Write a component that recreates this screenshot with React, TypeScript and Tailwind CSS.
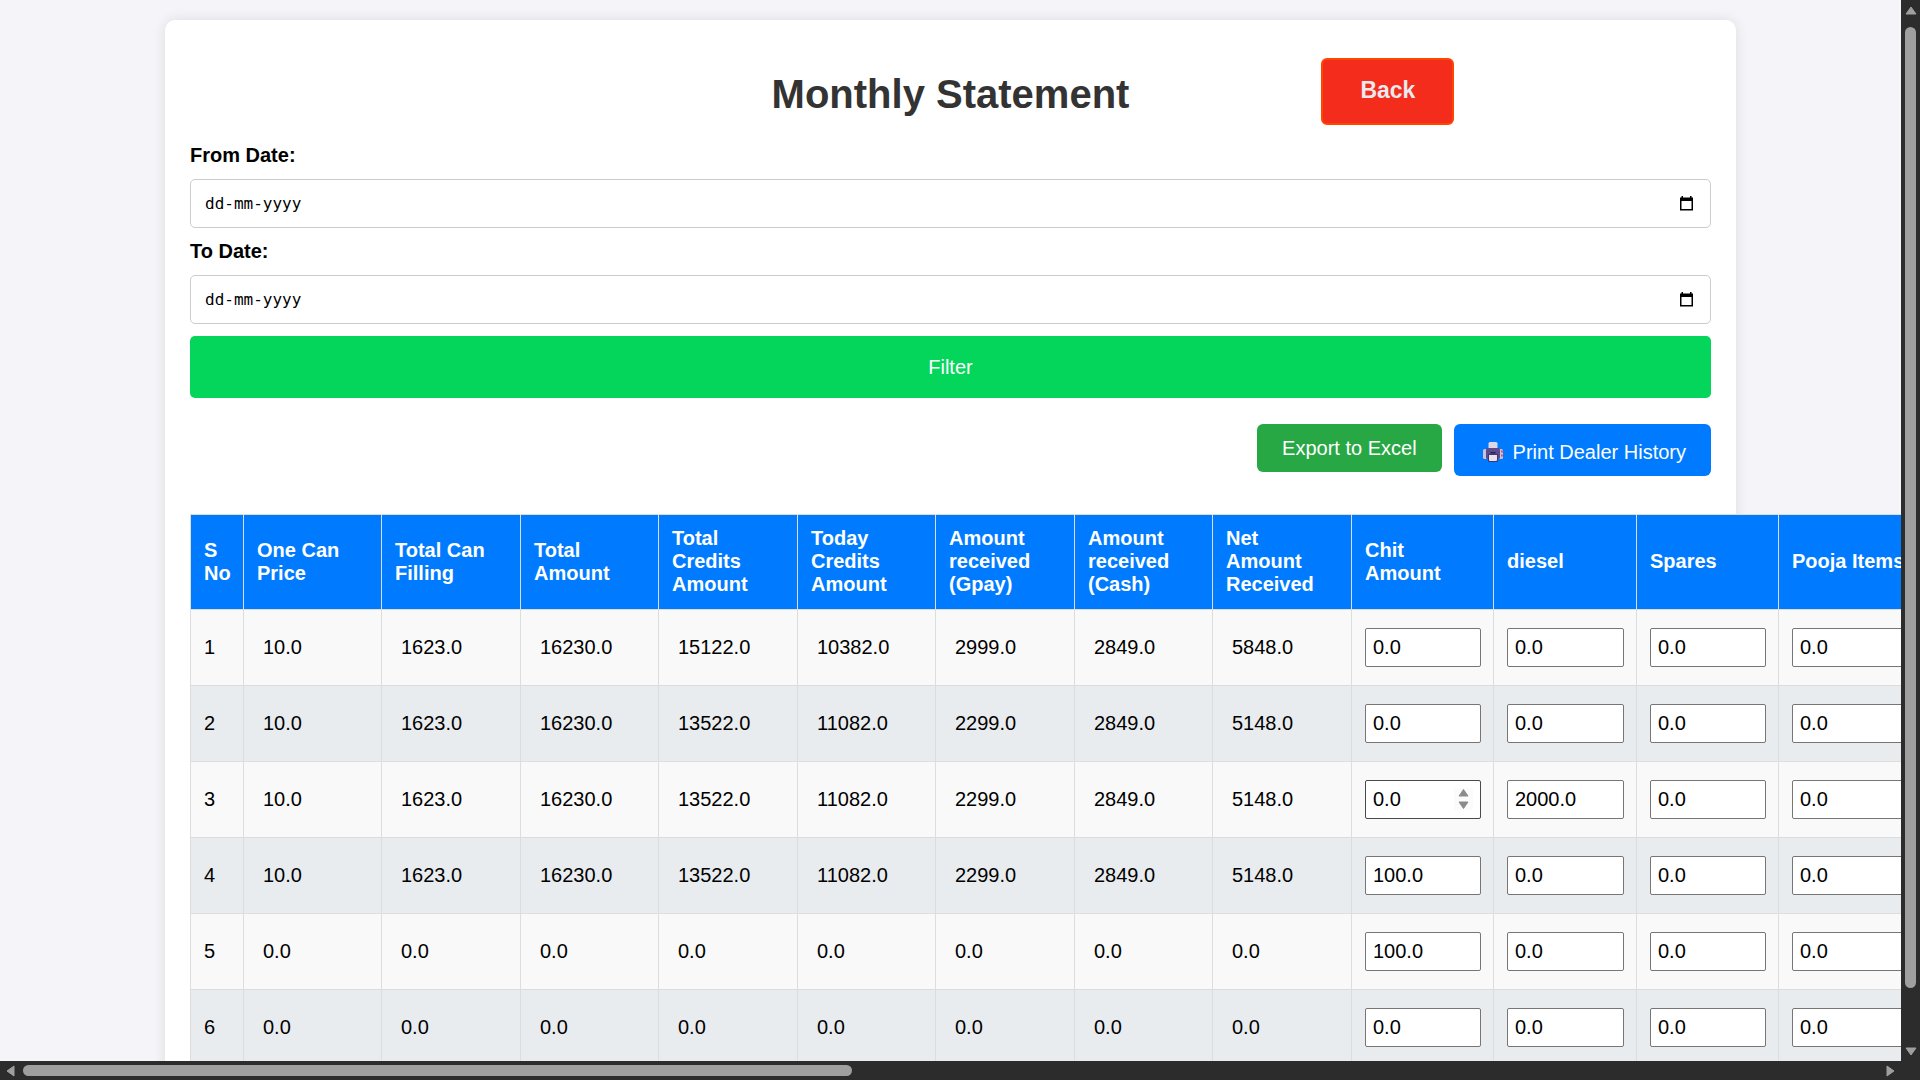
import { useState } from "react";

type Row = { readings: string[]; expenses: string[] };

const readingHeads = [
  "One Can Price",
  "Total Can Filling",
  "Total Amount",
  "Total Credits Amount",
  "Today Credits Amount",
  "Amount received (Gpay)",
  "Amount received (Cash)",
  "Net Amount Received",
];
const expenseHeads = ["Chit Amount", "diesel", "Spares", "Pooja Items"];

const zero = Array<string>(8).fill("0.0");
const typical = ["10.0", "1623.0", "16230.0", "13522.0", "11082.0", "2299.0", "2849.0", "5148.0"];

const rows: Row[] = [
  {
    readings: ["10.0", "1623.0", "16230.0", "15122.0", "10382.0", "2999.0", "2849.0", "5848.0"],
    expenses: ["0.0", "0.0", "0.0", "0.0"],
  },
  { readings: typical, expenses: ["0.0", "0.0", "0.0", "0.0"] },
  { readings: typical, expenses: ["0.0", "2000.0", "0.0", "0.0"] },
  { readings: typical, expenses: ["100.0", "0.0", "0.0", "0.0"] },
  { readings: zero, expenses: ["100.0", "0.0", "0.0", "0.0"] },
  { readings: zero, expenses: ["0.0", "0.0", "0.0", "0.0"] },
];

function DateField({ id, label }: { id: string; label: string }) {
  const [value, setValue] = useState("");
  return (
    <div className="flex flex-col gap-3">
      <label htmlFor={id} className="font-bold">
        {label}
      </label>
      <div className="flex h-[49px] items-center rounded-[5px] border border-[#cccccc] bg-white px-3.5">
        <input
          id={id}
          type="text"
          value={value}
          onChange={(e) => setValue(e.target.value)}
          placeholder="dd-mm-yyyy"
          className="min-w-0 flex-1 bg-transparent font-['DejaVu_Sans_Mono',monospace] text-[16px] leading-5 outline-none placeholder:text-black"
        />
        <button type="button" aria-label={"Pick " + label} className="mr-0.5">
          <svg width="15" height="16" viewBox="0 1 15 16" className="block">
            <path d="M2.500 1h1.500v2H2.500zM11 1h1.500v2H11z" fill="#000" />
            <path d="M1 2.500h13V15.500H1zM2.500 6v8h10V6z" fill="#000" fillRule="evenodd" />
          </svg>
        </button>
      </div>
    </div>
  );
}

function PrinterIcon() {
  return (
    <svg width="20" height="20" viewBox="0 0 20 20" className="block">
      <rect x="0" y="7" width="20" height="10" rx="1.500" fill="#c9c3d6" />
      <rect x="18" y="8.500" width="2" height="2" fill="#f0506e" />
      <rect x="18" y="12.500" width="2" height="2" fill="#f0506e" />
      <rect x="5.500" y="0" width="9" height="8" rx="1.500" fill="#dcd6e6" />
      <rect x="3" y="6" width="14" height="11" rx="1.500" fill="#5b4b8f" />
      <rect x="7.500" y="10" width="5" height="1.500" fill="#2b2145" />
      <path d="M5 12h10v6.500a1.500 1.500 0 0 1-1.500 1.500h-7A1.500 1.500 0 0 1 5 18.500z" fill="#43346f" />
      <path d="M6 13h8v5a1 1 0 0 1-1 1H7a1 1 0 0 1-1-1z" fill="#e6e1ee" />
    </svg>
  );
}

function AmountInput({ initial, label, active }: { initial: string; label: string; active: boolean }) {
  const [value, setValue] = useState(initial);
  return (
    <div className="relative">
      <input
        type="text"
        inputMode="decimal"
        aria-label={label}
        value={value}
        onChange={(e) => setValue(e.target.value)}
        className={
          "block h-[39px] w-full rounded-[2px] border bg-white px-[7px] text-[20px] leading-6 text-black " +
          (active ? "border-[#4a4a4a]" : "border-[#767676]")
        }
      />
      {active && (
        <svg
          width="19"
          height="22"
          viewBox="0 0 19 22"
          className="absolute top-2 right-2"
          aria-hidden="true"
        >
          <rect width="19" height="22" fill="#fbfbfb" />
          <path d="M9.500 1.500l4.500 6.500H5z M5 14h9l-4.500 6.500z" fill="#8b8b8b" stroke="#8b8b8b" strokeLinejoin="round" />
        </svg>
      )}
    </div>
  );
}

function Arrow({ direction }: { direction: "up" | "down" | "left" | "right" }) {
  const paths = {
    up: "M6 2l5 7H1z",
    down: "M6 10L1 3h10z",
    left: "M2 6l7-5v10z",
    right: "M10 6L3 1v10z",
  };
  return (
    <svg width="12" height="12" viewBox="0 0 12 12" className="block shrink-0" aria-hidden="true">
      <path d={paths[direction]} fill="#9f9f9f" stroke="#9f9f9f" strokeLinejoin="round" />
    </svg>
  );
}

export default function App() {
  return (
    <div className="grid h-screen grid-cols-[minmax(0,1fr)_19px] grid-rows-[minmax(0,1fr)_19px] bg-[#2c2c2c] font-['Liberation_Sans',Arial,sans-serif] text-[20px] leading-[23px] text-black">
      <main className="overflow-hidden bg-[#f4f4f9] px-[165px] pt-5">
        <div className="rounded-[10px] bg-white p-[25px] shadow-[0_0_13px_rgba(0,0,0,0.1)]">
          <header className="grid grid-cols-[1fr_auto_1fr] items-center pt-[13px] pb-[19px]">
            <h1 className="col-start-2 pt-1 text-[40px] leading-[46px] font-bold text-[#333333]">
              Monthly Statement
            </h1>
            <button
              type="button"
              className="ml-48 h-[67px] w-[133px] justify-self-start rounded-md border-2 border-[#ff4500] bg-[#f32c1c] pb-0.5 text-[23px] font-bold text-[#e9e9ee]"
            >
              Back
            </button>
          </header>

          <form className="flex flex-col gap-3" onSubmit={(e) => e.preventDefault()}>
            <DateField id="from-date" label="From Date:" />
            <DateField id="to-date" label="To Date:" />
            <button type="submit" className="h-[62px] rounded-[5px] bg-[#04d65c] text-white">
              Filter
            </button>
          </form>

          <div className="mt-[26px] flex items-start justify-end gap-3">
            <button type="button" className="h-12 rounded-md bg-[#28a745] px-[25px] text-white">
              Export to Excel
            </button>
            <button
              type="button"
              className="flex h-[52px] items-center gap-2.5 rounded-md bg-[#007bff] pr-[25px] pl-[29px] pt-1 text-white"
            >
              <PrinterIcon />
              Print Dealer History
            </button>
          </div>

          <table className="mt-[38px] w-[1731px] table-fixed border-collapse text-left">
            <colgroup>
              <col className="w-[53px]" />
            </colgroup>
            <colgroup>
              {readingHeads.map((head) => (
                <col key={head} className="odd:w-[138px] even:w-[139px]" />
              ))}
            </colgroup>
            <colgroup>
              {expenseHeads.map((head) => (
                <col key={head} className="odd:w-[142px] even:w-[143px]" />
              ))}
            </colgroup>
            <thead>
              <tr className="h-[95px] bg-[#007bff] text-white">
                <th className="border border-[#dddddd] pr-0 pb-px pl-[13px]">S No</th>
                {readingHeads.map((head) => (
                  <th key={head} className="border border-[#dddddd] pr-6 pb-px pl-[13px]">
                    {head}
                  </th>
                ))}
                {expenseHeads.map((head) => (
                  <th key={head} className="border border-[#dddddd] pr-3 pb-px pl-[13px]">
                    {head}
                  </th>
                ))}
              </tr>
            </thead>
            <tbody>
              {rows.map((row, r) => (
                <tr key={r} className="h-[76px] odd:bg-[#f9f9f9] even:bg-[#e9ecef]">
                  <td className="border border-[#dddddd] pl-[13px]">{r + 1}</td>
                  {row.readings.map((value, c) => (
                    <td key={c} className="border border-[#dddddd] pl-[19px]">
                      {value}
                    </td>
                  ))}
                  {row.expenses.map((value, c) => (
                    <td key={c} className="border border-[#dddddd] pr-3 pl-[13px]">
                      <AmountInput
                        initial={value}
                        label={expenseHeads[c] + " " + (r + 1)}
                        active={r === 2 && c === 0}
                      />
                    </td>
                  ))}
                </tr>
              ))}
            </tbody>
          </table>
        </div>
      </main>

      <div className="flex flex-col items-center gap-2.5 pt-[5px] pb-1">
        <Arrow direction="up" />
        <div className="w-[11px] flex-1">
          <div className="h-[95.3%] rounded-full bg-[#9f9f9f]" />
        </div>
        <Arrow direction="down" />
      </div>

      <div className="flex items-center gap-1.5 px-[5px]">
        <Arrow direction="left" />
        <div className="h-[11px] flex-1">
          <div className="h-full w-[44.7%] rounded-full bg-[#9f9f9f]" />
        </div>
        <Arrow direction="right" />
      </div>
    </div>
  );
}
